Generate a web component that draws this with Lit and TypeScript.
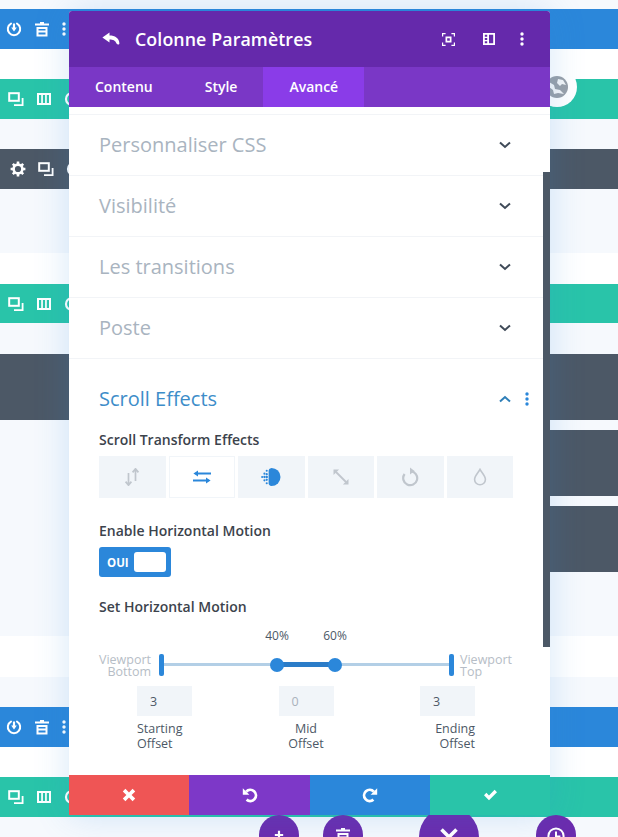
import { LitElement, html, css, svg } from "lit";
import { customElement } from "lit/decorators.js";

const ic = (w: number, h: number, vb: string, body: unknown) =>
  html`<svg class="ic" width=${w} height=${h} viewBox=${vb} aria-hidden="true">${body}</svg>`;

const power = ic(16, 16, "0 0 16 16", svg`<path d="M5 2.6A6.2 6.2 0 1 0 11 2.6" fill="none" stroke="currentColor" stroke-width="2" stroke-linecap="round"/><path d="M8 2.5V8" stroke="currentColor" stroke-width="2.2"/><path d="M5.2 6.6 8 10.4l2.8-3.8z" fill="currentColor"/>`);
const trash = ic(16, 16, "0 0 16 16", svg`<path d="M6 1h4v1.6h5v2H1v-2h5z" fill="currentColor"/><path d="M2.5 6h11v9.5h-11zM4.5 8v1.6h7V8zM4.5 11.4v2.2h7v-2.2z" fill="currentColor" fill-rule="evenodd"/>`);
const dots = ic(4, 14, "0 0 4 14", svg`<circle cx="2" cy="2" r="1.7" fill="currentColor"/><circle cx="2" cy="7" r="1.7" fill="currentColor"/><circle cx="2" cy="12" r="1.7" fill="currentColor"/>`);
const dup = ic(16, 16, "0 0 16 16", svg`<rect x="1.2" y="2.2" width="9.6" height="7.6" fill="none" stroke="currentColor" stroke-width="2"/><path d="M14.6 7v7.2H6" fill="none" stroke="currentColor" stroke-width="1.8"/>`);
const cols = ic(16, 14, "0 0 16 14", svg`<path d="M1 1h14v12H1zM3 3v8h2.2V3zM6.9 3v8h2.2V3zM10.8 3v8H13V3z" fill="currentColor" fill-rule="evenodd"/>`);
const gear = ic(16, 16, "0 0 16 16", svg`<circle cx="8" cy="8" r="4.4" fill="none" stroke="currentColor" stroke-width="2.6"/><path d="M8 .6v3M8 12.4v3M.6 8h3M12.4 8h3M2.8 2.8l2.1 2.1M11.1 11.1l2.1 2.1M2.8 13.2l2.1-2.1M11.1 4.9l2.1-2.1" stroke="currentColor" stroke-width="2.6"/>`);
const ring = ic(16, 16, "0 0 16 16", svg`<circle cx="8" cy="8" r="6" fill="none" stroke="currentColor" stroke-width="2.2"/>`);
const back = ic(18, 14, "0 0 18 14", svg`<path d="M7.5.6.4 5.6l7.1 5V7.4c3.6 0 5.8.8 7 4.2.9 1.4 3 1.4 2.9-.4C17 6.2 13 3.6 7.5 3.6z" fill="currentColor"/>`);
const focus = ic(13, 13, "0 0 13 13", svg`<path d="M.6 3.6V.6h3M9.4.6h3v3M12.4 9.4v3h-3M3.6 12.4h-3v-3" fill="none" stroke="currentColor" stroke-width="1.2"/><path d="M3.5 3.5h6v6h-6zM5.2 5.2v2.6h2.6V5.2z" fill="currentColor" fill-rule="evenodd"/>`);
const split = ic(12, 12, "0 0 12 12", svg`<path d="M0 0h12v12H0zM6 1.8v8.4h4.2V1.8zM1.8 1.8v2h2.4v-2zM1.8 5v2h2.4V5zM1.8 8.2v2h2.4v-2z" fill="currentColor" fill-rule="evenodd"/>`);
const chevDown = ic(12, 8, "0 0 12 8", svg`<path d="M1 1.4 6 6l5-4.6" fill="none" stroke="currentColor" stroke-width="2"/>`);
const chevUp = ic(12, 8, "0 0 12 8", svg`<path d="M1 6.6 6 2l5 4.6" fill="none" stroke="currentColor" stroke-width="2"/>`);

const tabUpDown = ic(16, 18, "0 0 16 18", svg`<path d="M4.5 5v12M1.6 13.6l2.9 3.6 2.9-3.6M11.5 13V1M8.6 4.4l2.9-3.6 2.9 3.6" fill="none" stroke="currentColor" stroke-width="1.7"/>`);
const tabLR = ic(18, 14, "0 0 18 14", svg`<path d="M4 3.5h14" stroke="currentColor" stroke-width="2"/><path d="M5 .6.4 3.5 5 6.4z" fill="currentColor"/><path d="M0 10.5h14" stroke="currentColor" stroke-width="2"/><path d="M13 7.6l4.6 2.9-4.6 2.9z" fill="currentColor"/>`);
const tabFade = ic(20, 20, "0 0 21 20", svg`<path d="M11 .5a9.5 9.5 0 1 1 0 19c-2-.5-3-1.5-3-3v-13c0-1.5 1-2.5 3-3z" fill="currentColor"/><g fill="currentColor"><circle cx="6" cy="3.5" r="1.1"/><circle cx="3.6" cy="6.5" r="1.1"/><circle cx="6" cy="7" r="1.2"/><circle cx="1.2" cy="10" r="1.1"/><circle cx="3.6" cy="10" r="1.2"/><circle cx="6" cy="10" r="1.3"/><circle cx="3.6" cy="13.5" r="1.1"/><circle cx="6" cy="13" r="1.2"/><circle cx="6" cy="16.5" r="1.1"/></g>`);
const tabScale = ic(16, 16, "0 0 16 16", svg`<path d="M3 3l10 10" stroke="currentColor" stroke-width="1.8"/><path d="M.5.5h5.6L.5 6.1zM15.5 15.5H9.9l5.6-5.6z" fill="currentColor"/>`);
const tabRot = ic(18, 20, "0 0 18 20", svg`<path d="M9.6 4.2A7 7 0 1 1 3.6 7" fill="none" stroke="currentColor" stroke-width="2.2"/><path d="M9 .4l4.6 3.6L9 7.6z" fill="currentColor"/>`);
const tabDrop = ic(14, 18, "0 0 14 18", svg`<path d="M7 1.4C5.4 4.6 1.6 7.6 1.6 11.4a5.4 5.4 0 0 0 10.8 0C12.4 7.6 8.6 4.6 7 1.4z" fill="none" stroke="currentColor" stroke-width="1.6"/>`);

const fx = ic(14, 14, "0 0 14 14", svg`<path d="M3.4.8 7 4.4 10.6.8l2.6 2.6L9.6 7l3.6 3.6-2.6 2.6L7 9.6l-3.6 3.6-2.6-2.6L4.4 7 .8 3.4z" fill="currentColor"/>`);
const undo = ic(16, 16, "0 0 16 16", svg`<path d="M4.2 4.6A5.6 5.6 0 1 1 4.6 12.6" fill="none" stroke="currentColor" stroke-width="2.8"/><path d="M.8 1.2v6.6h6.6z" fill="currentColor"/>`);
const redo = ic(16, 16, "0 0 16 16", svg`<path d="M11.8 4.6a5.6 5.6 0 1 0-.4 8" fill="none" stroke="currentColor" stroke-width="2.8"/><path d="M15.2 1.2v6.6H8.6z" fill="currentColor"/>`);
const check = ic(15, 12, "0 0 15 12", svg`<path d="M1 6.2l2.4-2.4 2.6 2.6L11.6.8 14 3.2 6 11.2z" fill="currentColor"/>`);

const plus = ic(10, 10, "0 0 12 12", svg`<path d="M6 1v10M1 6h10" stroke="currentColor" stroke-width="2.6"/>`);
const bigX = ic(20, 20, "0 0 20 20", svg`<path d="M2.5 2.5l15 15M17.5 2.5l-15 15" stroke="currentColor" stroke-width="3.6"/>`);
const clock = ic(18, 18, "0 0 18 18", svg`<circle cx="9" cy="9" r="7.6" fill="none" stroke="currentColor" stroke-width="2"/><path d="M9 4.4V9.6h4.4" fill="none" stroke="currentColor" stroke-width="2"/>`);
const globe = ic(22, 22, "0 0 22 22", svg`<circle cx="11" cy="11" r="11" fill="#9aa0a8"/><path d="M3 6l5 3 1 4 5 1 4 4-6-1-4 1-1-4-4-3zM12 3l5 1 3 5-4-1-2 2-3-3z" fill="#fff" opacity=".9"/>`);

type Row = { h: number; tone: string; tools?: unknown[]; side?: boolean; pad?: string };

const ROWS: Row[] = [
  { h: 9, tone: "light" },
  { h: 40, tone: "blue", tools: [power, trash, dots], pad: "p6" },
  { h: 30, tone: "white" },
  { h: 40, tone: "green", tools: [dup, cols, ring], pad: "p8" },
  { h: 30, tone: "light" },
  { h: 40, tone: "slate", tools: [gear, dup, ring], pad: "p10" },
  { h: 64, tone: "light" },
  { h: 31, tone: "white" },
  { h: 39, tone: "green", tools: [dup, cols, ring], pad: "p8" },
  { h: 31, tone: "light" },
  { h: 66, tone: "slate" },
  { h: 10, tone: "light" },
  { h: 66, tone: "light", side: true },
  { h: 10, tone: "light" },
  { h: 66, tone: "light", side: true },
  { h: 64, tone: "light" },
  { h: 41, tone: "white" },
  { h: 30, tone: "light" },
  { h: 40, tone: "blue", tools: [power, trash, dots], pad: "p6" },
  { h: 30, tone: "white" },
  { h: 40, tone: "green", tools: [dup, cols, ring], pad: "p8" },
  { h: 20, tone: "light" },
];

@customElement("app-root")
export class AppRoot extends LitElement {
  static styles = css`
    :host {
      display: block;
      width: 618px;
      height: 837px;
      overflow: hidden;
      position: relative;
      font-family: "Open Sans", "Noto Sans", sans-serif;
      background: #f6f9fd;
    }
    .ic { display: block; flex: none; }
    .canvas { display: flex; flex-direction: column; }
    .row { display: flex; align-items: center; gap: 12px; color: #fff; flex: none; }
    .light { background: #f6f9fd; }
    .white { background: #fff; }
    .blue { background: #2b87da; }
    .green { background: #29c4a9; }
    .slate { background: #4c5866; }
    .p6 { padding-left: 6px; }
    .p8 { padding-left: 8px; }
    .p10 { padding-left: 10px; }
    .sideblock { margin-left: auto; width: 68px; height: 100%; background: #4c5866; }

    .globe {
      position: absolute; left: 537px; top: 67px; width: 40px; height: 40px;
      border-radius: 50%; background: #fff; display: flex; align-items: center; justify-content: center;
    }
    .fab {
      position: absolute; border-radius: 50%; background: #6b2cae; color: #fff;
      display: flex; justify-content: center; width: 40px; height: 40px; top: 815px; padding-top: 12px; box-sizing: border-box;
    }
    .fab.big { width: 60px; height: 60px; top: 807px; left: 419px; padding-top: 20px; }
    .f1 { left: 259px; padding-top: 15px; }
    .f2 { left: 323px; }
    .f3 { left: 536px; }

    .modal {
      position: absolute; left: 69px; top: 11px; width: 481px; height: 804px;
      display: flex; flex-direction: column; background: #fff; border-radius: 3px 3px 0 0;
      box-shadow: 0 0 36px rgba(43, 135, 218, 0.2);
    }
    .head {
      height: 56px; flex: none; background: #6529ab; color: #fff; display: flex; align-items: center;
      padding-left: 33px; border-radius: 3px 3px 0 0;
    }
    .title { font-size: 17.8px; font-weight: 600; margin-left: 15px; flex: 1; letter-spacing: 0.1px; }
    .hicons { display: flex; align-items: center; margin-right: 26px; }
    .hicons .i1 { margin-right: 28px; }
    .hicons .i2 { margin-right: 25px; }
    .tabs { height: 40px; flex: none; background: #7a37c6; color: #fff; display: flex; }
    .tab { padding: 0 26px 2px; font-size: 14px; font-weight: 600; display: flex; align-items: center; }
    .tab.on { background: #8a3ce8; }
    .body { flex: 1; min-height: 0; padding: 7px 0 0; overflow: hidden; position: relative; }
    .sec {
      height: 61px; box-sizing: border-box; border-top: 1px solid #f2f4f7; display: flex; align-items: center;
      padding: 0 39px 0 30px; justify-content: space-between; color: #3f4a58;
    }
    .sec span { font-size: 20px; color: #a9b4c0; margin-bottom: 2px; }
    .open { border-top: 1px solid #f2f4f7; padding: 26px 21px 0 30px; }
    .ohead { display: flex; align-items: center; height: 28px; color: #2f7fb8; }
    .ohead .t { font-size: 20px; color: #3d8dc9; flex: 1; margin-bottom: 2px; }
    .ohead .c { margin-right: 14px; }
    .ohead .d { color: #2b87da; }
    .lab { font-size: 14px; font-weight: 600; color: #3c434c; line-height: 18px; }
    .l1 { margin-top: 18px; }
    .l2 { margin-top: 24px; }
    .l3 { margin-top: 21px; }
    .pick { display: grid; grid-template-columns: repeat(6, 1fr); gap: 3px; margin-top: 7px; width: 414px; height: 42px; }
    .cell { background: #f1f5f9; color: #c0c6cd; display: flex; align-items: center; justify-content: center; }
    .cell.on { background: #fff; color: #2b87da; box-shadow: inset 0 0 0 1px #f1f5f9; }
    .cell.fade { color: #2b87da; }
    .toggle {
      margin-top: 7px; width: 72px; height: 30px; box-sizing: border-box; background: #2b87da; border-radius: 3px;
      display: flex; align-items: center; justify-content: space-between; padding: 0 5px 0 8px; color: #fff;
      font-size: 11.5px; font-weight: 700;
    }
    .knob { width: 32px; height: 20px; background: #fff; border-radius: 3px; }
    .slider { position: relative; height: 54px; width: 414px; margin-top: 12px; font-size: 12px; }
    .pct { position: absolute; top: 0; transform: translateX(-50%); color: #4c5866; font-size: 12px; line-height: 16px; }
    .track { position: absolute; left: 62px; width: 290px; top: 35px; height: 3px; background: #b3cfe6; }
    .range { position: absolute; left: 116px; width: 58px; top: -1px; height: 5px; background: #2b7cc8; }
    .stop { position: absolute; top: 26px; width: 5px; height: 22px; border-radius: 2px; background: #2b87da; }
    .thumb { position: absolute; top: 30px; width: 14px; height: 14px; margin-left: -7px; border-radius: 50%; background: #2b87da; }
    .vp { position: absolute; top: 26px; color: #b6bdc6; font-size: 12.5px; line-height: 12px; }
    .vp.start { right: 362px; text-align: right; }
    .vp.end { left: 361px; }
    .offs { display: flex; justify-content: space-between; margin: 4px 0 0 38px; width: 338px; }
    .off { width: 55px; display: flex; flex-direction: column; font-size: 12.5px; line-height: 15px; color: #4c5866; }
    .off .txt { margin-top: 5px; white-space: nowrap; }
    .off.m .txt { text-align: center; }
    .off.e .txt { text-align: right; }
    .inp { height: 30px; background: #f1f5f9; padding-left: 13px; display: flex; align-items: center; font-size: 12.5px; color: #4c5866; }
    .inp.dim { color: #aab2bc; }
    .scroll { position: absolute; left: 474px; top: 65px; width: 7px; height: 475px; background: #4c5866; }
    .foot { display: grid; grid-template-columns: 120px 121px 120px 120px; height: 40px; flex: none; color: #fff; }
    .foot div { display: flex; align-items: center; justify-content: center; }
    .fr { background: #ef5555; }
    .fv { background: #7d38c8; }
    .fb { background: #2b87da; }
    .fg { background: #29c4a9; }
  `;

  render() {
    return html`
      <div class="canvas">
        ${ROWS.map(
          (r) => html`<div class="row ${r.tone} ${r.pad ?? ""}" style="height:${r.h}px">
            ${r.tools ?? ""}${r.side ? html`<div class="sideblock"></div>` : ""}
          </div>`
        )}
      </div>
      <div class="globe">${globe}</div>
      <div class="fab f1">${plus}</div>
      <div class="fab f2">${trash}</div>
      <div class="fab big">${bigX}</div>
      <div class="fab f3">${clock}</div>
      <section class="modal">
        <div class="head">
          ${back}
          <div class="title">Colonne Paramètres</div>
          <div class="hicons">
            <span class="i1">${focus}</span><span class="i2">${split}</span>${dots}
          </div>
        </div>
        <nav class="tabs">
          <div class="tab">Contenu</div>
          <div class="tab">Style</div>
          <div class="tab on">Avancé</div>
        </nav>
        <div class="body">
          ${["Personnaliser CSS", "Visibilité", "Les transitions", "Poste"].map(
            (t) => html`<div class="sec"><span>${t}</span>${chevDown}</div>`
          )}
          <div class="open">
            <div class="ohead">
              <div class="t">Scroll Effects</div>
              <span class="c">${chevUp}</span><span class="d">${dots}</span>
            </div>
            <div class="lab l1">Scroll Transform Effects</div>
            <div class="pick">
              <div class="cell">${tabUpDown}</div>
              <div class="cell on">${tabLR}</div>
              <div class="cell fade">${tabFade}</div>
              <div class="cell">${tabScale}</div>
              <div class="cell">${tabRot}</div>
              <div class="cell">${tabDrop}</div>
            </div>
            <div class="lab l2">Enable Horizontal Motion</div>
            <div class="toggle"><span>OUI</span><span class="knob"></span></div>
            <div class="lab l3">Set Horizontal Motion</div>
            <div class="slider">
              <span class="pct" style="left:178px">40%</span>
              <span class="pct" style="left:236px">60%</span>
              <div class="vp start">Viewport<br />Bottom</div>
              <div class="track"><div class="range"></div></div>
              <div class="stop" style="left:60px"></div>
              <div class="stop" style="left:350px"></div>
              <div class="thumb" style="left:178px"></div>
              <div class="thumb" style="left:236px"></div>
              <div class="vp end">Viewport<br />Top</div>
            </div>
            <div class="offs">
              <div class="off"><div class="inp">3</div><div class="txt">Starting<br />Offset</div></div>
              <div class="off m"><div class="inp dim">0</div><div class="txt">Mid<br />Offset</div></div>
              <div class="off e"><div class="inp">3</div><div class="txt">Ending<br />Offset</div></div>
            </div>
          </div>
          <div class="scroll"></div>
        </div>
        <div class="foot">
          <div class="fr">${fx}</div>
          <div class="fv">${undo}</div>
          <div class="fb">${redo}</div>
          <div class="fg">${check}</div>
        </div>
      </section>
    `;
  }
}
